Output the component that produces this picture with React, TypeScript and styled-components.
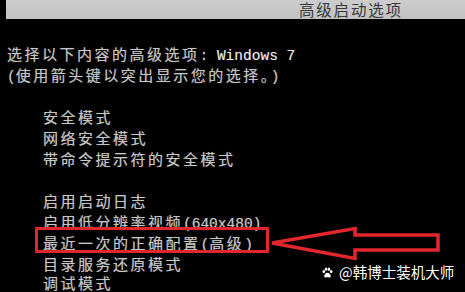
import React from 'react';
import styled, { createGlobalStyle } from 'styled-components';

const Global = createGlobalStyle`
  html, body { margin: 0; padding: 0; background: #000; }
  body { width: 465px; height: 292px; overflow: hidden; }
`;

const Screen = styled.div`
  position: relative;
  width: 465px;
  height: 292px;
  background: #000;
  overflow: hidden;
  font-family: "Noto Sans CJK SC", sans-serif;
`;

const TitleBar = styled.div`
  margin-left: 6px;
  height: 19px;
  background: linear-gradient(#cdcdcd, #c2c2c2);
  padding-left: 293px;
  color: #383838;
  font-size: 15.5px;
  letter-spacing: 1.8px;
  line-height: 19px;
  white-space: nowrap;
`;

const Console = styled.div`
  padding: 24px 0 0 7px;
  color: #c6c6c6;
  font-size: 15px;
  letter-spacing: 2.5px;
  text-shadow: 0 0 1px rgba(200, 200, 200, 0.5);
`;

const Line = styled.div<{ $indent?: boolean; $last?: boolean }>`
  height: ${(p) => (p.$last ? 18 : 21)}px;
  line-height: ${(p) => (p.$last ? 18 : 21)}px;
  white-space: nowrap;
  padding-left: ${(p) => (p.$indent ? 36 : 0)}px;
`;

const Gap = styled.div`
  height: 21px;
`;

const Half = styled.span<{ $bright?: boolean }>`
  font-family: "Liberation Mono", "DejaVu Sans Mono", monospace;
  font-size: 14.5px;
  letter-spacing: 0;
  color: ${(p) => (p.$bright ? '#e8e8e8' : 'inherit')};
`;

const Selected = styled(Line)`
  position: relative;
  &::before {
    content: '';
    position: absolute;
    left: 28px;
    top: -5px;
    width: 234px;
    height: 26px;
    border: 3px solid #e2262e;
    box-sizing: border-box;
  }
`;

const Arrow = styled.svg`
  position: absolute;
  left: 265px;
  top: 222px;
  width: 180px;
  height: 42px;
`;

const Watermark = styled.div`
  position: absolute;
  left: 322px;
  top: 262px;
  display: flex;
  align-items: center;
  gap: 6px;
  color: #fff;
  font-family: "Noto Sans CJK SC", sans-serif;
  font-size: 14.5px;
  line-height: 20px;
  white-space: nowrap;
`;

const Paw = () => (
  <svg width="11" height="11" viewBox="0 0 12 12">
    <ellipse cx="2" cy="5" rx="1.4" ry="1.7" fill="#fff" />
    <ellipse cx="4.4" cy="2.4" rx="1.4" ry="1.8" fill="#fff" />
    <ellipse cx="7.6" cy="2.4" rx="1.4" ry="1.8" fill="#fff" />
    <ellipse cx="10" cy="5" rx="1.4" ry="1.7" fill="#fff" />
    <path d="M6 6.2c-2 0-3.6 2.2-3.6 3.8 0 1.3 1.2 1.6 2 1.4.6-.1 1-.4 1.6-.4s1 .3 1.6.4c.8.2 2-.1 2-1.4C9.6 8.4 8 6.2 6 6.2z" fill="#fff" />
  </svg>
);

export default function App() {
  return (
    <Screen>
      <Global />
      <TitleBar>高级启动选项</TitleBar>
      <Console>
        <Line>
          选择以下内容的高级选项<Half>: </Half>
          <Half $bright>Windows 7</Half>
        </Line>
        <Line>
          <Half>(</Half>使用箭头键以突出显示您的选择。<Half>)</Half>
        </Line>
        <Gap />
        <Line $indent>安全模式</Line>
        <Line $indent>网络安全模式</Line>
        <Line $indent>带命令提示符的安全模式</Line>
        <Gap />
        <Line $indent>启用启动日志</Line>
        <Line $indent>
          启用低分辨率视频<Half>(640x480)</Half>
        </Line>
        <Selected $indent>
          最近一次的正确配置<Half>(</Half>高级<Half>)</Half>
        </Selected>
        <Line $indent>目录服务还原模式</Line>
        <Line $indent $last>调试模式</Line>
      </Console>
      <Arrow viewBox="0 0 180 42">
        <polygon
          points="7,21 90,6.5 90,13 173,13 173,28 90,28 90,36.5"
          fill="none"
          stroke="#e2262e"
          strokeWidth="3.5"
          strokeLinejoin="miter"
        />
      </Arrow>
      <Watermark>
        <Paw />
        <span>@韩博士装机大师</span>
      </Watermark>
    </Screen>
  );
}
